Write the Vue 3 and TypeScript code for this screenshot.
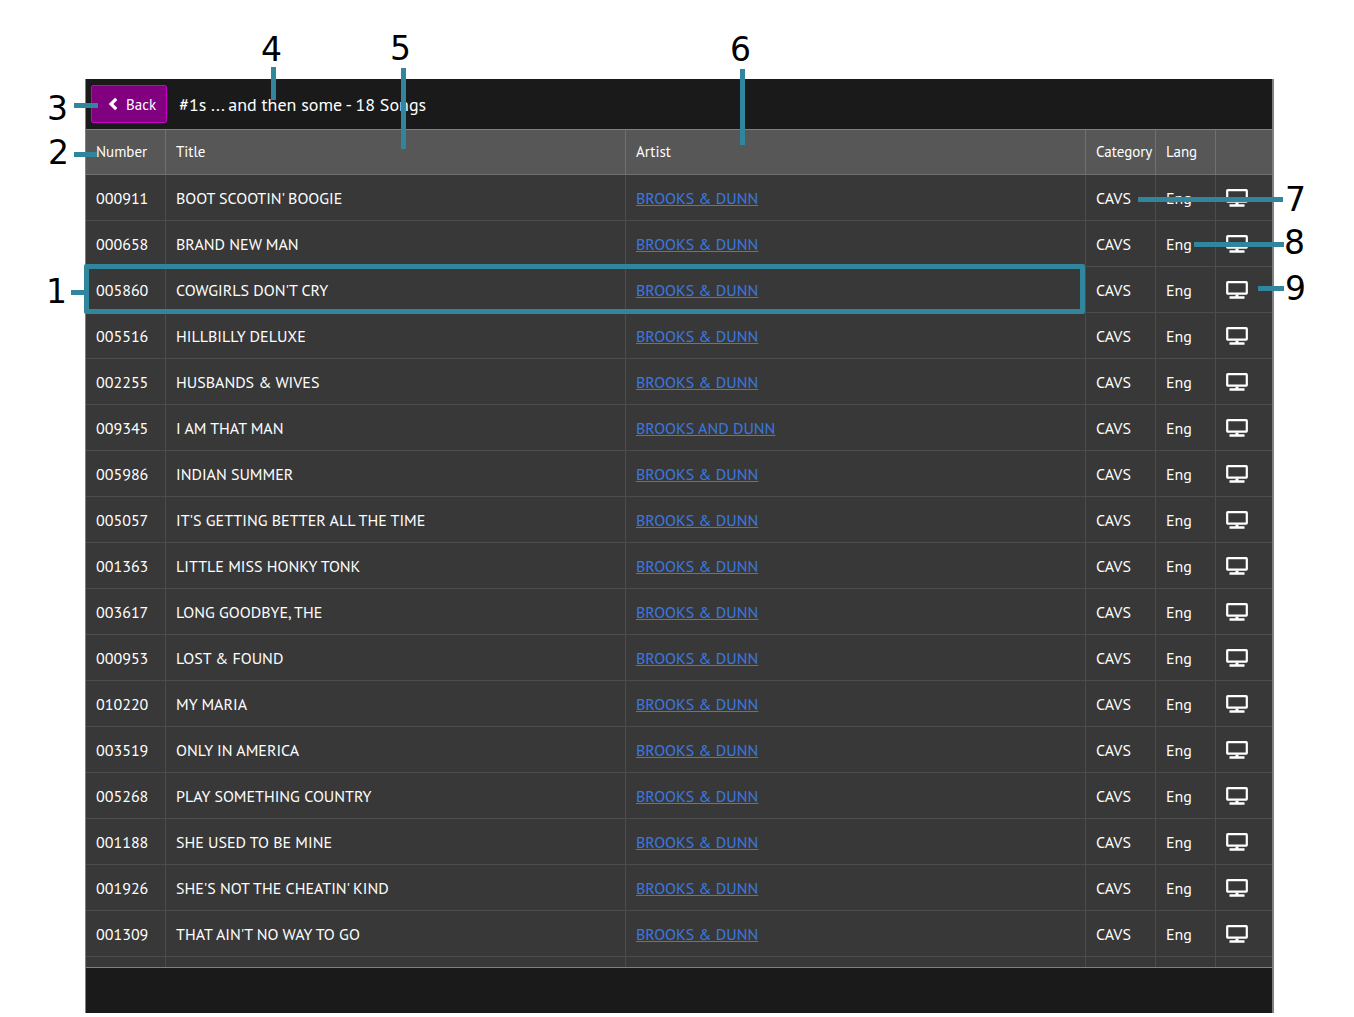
<script setup lang="ts">
interface Song {
  number: string
  title: string
  artist: string
}

const duo = 'BROOKS & DUNN'

const songs: Song[] = [
  { number: '000911', title: "BOOT SCOOTIN' BOOGIE", artist: duo },
  { number: '000658', title: 'BRAND NEW MAN', artist: duo },
  { number: '005860', title: "COWGIRLS DON'T CRY", artist: duo },
  { number: '005516', title: 'HILLBILLY DELUXE', artist: duo },
  { number: '002255', title: 'HUSBANDS & WIVES', artist: duo },
  { number: '009345', title: 'I AM THAT MAN', artist: 'BROOKS AND DUNN' },
  { number: '005986', title: 'INDIAN SUMMER', artist: duo },
  { number: '005057', title: "IT'S GETTING BETTER ALL THE TIME", artist: duo },
  { number: '001363', title: 'LITTLE MISS HONKY TONK', artist: duo },
  { number: '003617', title: 'LONG GOODBYE, THE', artist: duo },
  { number: '000953', title: 'LOST & FOUND', artist: duo },
  { number: '010220', title: 'MY MARIA', artist: duo },
  { number: '003519', title: 'ONLY IN AMERICA', artist: duo },
  { number: '005268', title: 'PLAY SOMETHING COUNTRY', artist: duo },
  { number: '001188', title: 'SHE USED TO BE MINE', artist: duo },
  { number: '001926', title: "SHE'S NOT THE CHEATIN' KIND", artist: duo },
  { number: '001309', title: "THAT AIN'T NO WAY TO GO", artist: duo },
]

const callouts: number[] = [1, 2, 3, 4, 5, 6, 7, 8, 9]
</script>

<template>
  <div class="page">
    <main class="panel">
      <header class="topbar">
        <button type="button" class="back">
          <svg class="chevron" viewBox="0 0 10 14" aria-hidden="true">
            <path d="M8.2 1.8 3 7l5.2 5.2" fill="none" stroke="currentColor" stroke-width="3.2" />
          </svg>
          Back
        </button>
        <h1>#1s ... and then some - 18 Songs</h1>
      </header>

      <div class="list">
        <table>
          <colgroup>
            <col class="col-number" />
            <col />
            <col />
            <col class="col-category" />
            <col class="col-lang" />
            <col class="col-screen" />
          </colgroup>
          <thead>
            <tr>
              <th scope="col">Number</th>
              <th scope="col">Title</th>
              <th scope="col">Artist</th>
              <th scope="col">Category</th>
              <th scope="col">Lang</th>
              <th scope="col"></th>
            </tr>
          </thead>
          <tbody>
            <tr v-for="song in songs" :key="song.number">
              <td>{{ song.number }}</td>
              <td>{{ song.title }}</td>
              <td><a href="#">{{ song.artist }}</a></td>
              <td>CAVS</td>
              <td>Eng</td>
              <td>
                <svg class="screen" viewBox="0 0 22 18" role="img" aria-label="Screen">
                  <rect x="1.2" y="1.2" width="19.6" height="11.4" rx="0.6" fill="none" stroke="currentColor" stroke-width="2.2" />
                  <path d="M9.5 13.5h3v2h-3zM3.5 15.3h15v2.4h-15z" fill="currentColor" />
                </svg>
              </td>
            </tr>
            <tr>
              <td v-for="cell in 6" :key="cell"></td>
            </tr>
          </tbody>
        </table>
      </div>

      <footer class="bottombar"></footer>
    </main>

    <div class="highlight"></div>
    <template v-for="n in callouts" :key="n">
      <span class="label" :class="`label-${n}`">{{ n }}</span>
      <span class="line" :class="`line-${n}`"></span>
    </template>
  </div>
</template>

<style>
body {
  margin: 0;
  background: #fff;
}
</style>

<style scoped>
.page {
  position: relative;
  box-sizing: border-box;
  height: 100vh;
  padding: 79px 80px 4px 85px;
  overflow: hidden;
  font-family: "PT Sans", "Noto Sans", sans-serif;
  font-size: 16px;
  color: #fff;
}

.panel {
  display: flex;
  flex-direction: column;
  box-sizing: border-box;
  height: 100%;
  border-left: 1px solid #808080;
  border-right: 2px solid #808080;
  background: #1a1a1a;
}

.topbar {
  display: flex;
  align-items: center;
  gap: 12px;
  flex: none;
  height: 50px;
  padding-left: 5px;
}

.back {
  display: flex;
  align-items: center;
  gap: 8px;
  box-sizing: border-box;
  height: 38px;
  padding: 0 10px 0 16px;
  border: 1px solid #c800c8;
  border-radius: 2px;
  background: #800080;
  color: #fff;
  font-family: inherit;
  font-size: 15px;
}

.chevron {
  width: 10px;
  height: 14px;
}

h1 {
  margin: 0;
  font-size: 18px;
  font-weight: 400;
}

.list {
  flex: 1;
  min-height: 0;
  overflow: hidden;
  border-top: 1px solid #808080;
  border-bottom: 1px solid #808080;
  background: #383838;
}

table {
  width: 100%;
  table-layout: fixed;
  border-collapse: separate;
  border-spacing: 0;
}

.col-number {
  width: 80px;
}

.col-category {
  width: 70px;
}

.col-lang {
  width: 60px;
}

.col-screen {
  width: 56px;
}

th,
td {
  box-sizing: border-box;
  height: 46px;
  padding: 0 0 0 10px;
  border-right: 1px solid #4c4c4c;
  border-bottom: 1px solid #4c4c4c;
  text-align: left;
  font-weight: 400;
  line-height: 20px;
  white-space: nowrap;
}

th {
  height: 45px;
  border-color: #707070;
  background: #575757;
  font-size: 15px;
}

th:last-child,
td:last-child {
  border-right: 0;
}

a {
  color: #3b78e0;
}

.screen {
  display: block;
  width: 22px;
  height: 18px;
}

.bottombar {
  flex: none;
  height: 45px;
}

/* Numbered callouts drawn over the song list */
.label {
  position: absolute;
  color: #000;
  font-family: "DejaVu Sans", sans-serif;
  font-size: 33px;
  line-height: 40px;
}

.line {
  position: absolute;
  height: 5px;
  background: #31859c;
}

.highlight {
  position: absolute;
  top: 264px;
  left: 84px;
  right: 269px;
  box-sizing: border-box;
  height: 50px;
  border: 5px solid #31859c;
  border-radius: 2px;
}

.label-1 { top: 272px; left: 46px; }
.label-2 { top: 133px; left: 48px; }
.label-3 { top: 89px; left: 47px; }
.label-4 { top: 30px; left: 261px; }
.label-5 { top: 29px; left: 390px; }
.label-6 { top: 30px; left: 730px; }
.label-7 { top: 180px; right: 48px; }
.label-8 { top: 223px; right: 49px; }
.label-9 { top: 269px; right: 48px; }

.line-1 { top: 290px; left: 71px; width: 14px; }
.line-2 { top: 152px; left: 74px; width: 23px; }
.line-3 { top: 103px; left: 74px; width: 24px; }
.line-4 { top: 67px; left: 271px; width: 5px; height: 33px; }
.line-5 { top: 68px; left: 401px; width: 5px; height: 81px; }
.line-6 { top: 69px; left: 740px; width: 5px; height: 76px; }
.line-7 { top: 197px; right: 71px; width: 145px; }
.line-8 { top: 242px; right: 70px; width: 90px; }
.line-9 { top: 286px; right: 70px; width: 26px; }
</style>
